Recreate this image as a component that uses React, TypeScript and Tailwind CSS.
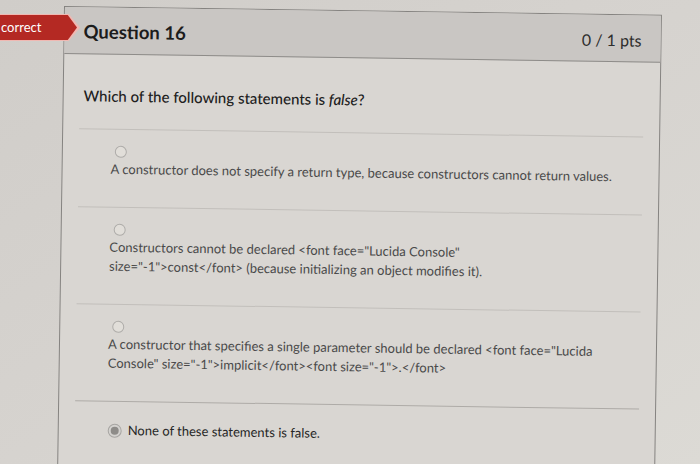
import React from "react";

function Radio({ selected = false }: { selected?: boolean }) {
  if (selected) {
    return (
      <div className="w-[14px] h-[14px] rounded-full bg-[#d4d2cf] border border-[#a7a5a2] flex items-center justify-center shrink-0">
        <div className="w-[8px] h-[8px] rounded-full bg-[#8e8c89]" />
      </div>
    );
  }
  return <div className="w-[12px] h-[12px] rounded-full border border-[#aeaca9] bg-[#e1ded9]" />;
}

function Answer({ lines }: { lines: string[] }) {
  return (
    <div className="border-t border-[#c2bfbb] pt-[16px] pb-[28px]">
      <div className="pl-[36px]">
        <Radio />
      </div>
      <div className="pl-[32px] mt-[2px] text-[13px] leading-[19px] text-[#4a4a4a]">
        {lines.map((l, i) => (
          <div key={i}>{l}</div>
        ))}
      </div>
    </div>
  );
}

export default function App() {
  return (
    <div className="relative w-[700px] h-[464px] overflow-hidden bg-linear-to-br from-[#d0cdc9] via-[#d6d3cf] to-[#dcdad5] [font-family:Lato,sans-serif]">
      <div className="pl-[64px] pt-[6px]">
        <div className="w-[598px] h-[520px] origin-top-left rotate-[0.85deg] border border-[#858380] bg-[#d9d6d2]">
          <div className="h-[47px] pt-[3px] flex items-center justify-between px-[19px] bg-[#c9c6c3] border-b border-[#8e8c89]">
            <div className="text-[18.5px] font-bold text-[#1c1c1c]">Question 16</div>
            <div className="text-[16px] text-[#2e2e2e]">0 / 1 pts</div>
          </div>
          <div className="px-[16px]">
            <div className="pt-[31px] pb-[23px] pl-[4px] text-[15px] leading-[20px] text-[#202020] font-medium">
              Which of the following statements is <i>false</i>?
            </div>
            <Answer lines={["A constructor does not specify a return type, because constructors cannot return values."]} />
            <Answer
              lines={[
                'Constructors cannot be declared <font face="Lucida Console"',
                'size="-1">const</font> (because initializing an object modifies it).',
              ]}
            />
            <Answer
              lines={[
                'A constructor that specifies a single parameter should be declared <font face="Lucida',
                'Console" size="-1">implicit</font><font size="-1">.</font>',
              ]}
            />
            <div className="border-t border-[#aeaba7] pt-[19px] flex items-center gap-[6px] pl-[33px]">
              <Radio selected />
              <span className="text-[13px] leading-[19px] text-[#262626]">None of these statements is false.</span>
            </div>
          </div>
        </div>
      </div>
      <div className="absolute left-0 top-[14px] w-[80px] h-[27px] bg-[#f0b8b2] [clip-path:polygon(0_0,86%_0,100%_50%,86%_100%,0_100%)]">
        <div className="absolute left-0 top-[1px] w-[77px] h-[25px] bg-[#b42923] [clip-path:polygon(0_0,88%_0,100%_50%,88%_100%,0_100%)] flex items-center pl-[1px] text-white text-[13px]">
          correct
        </div>
      </div>
    </div>
  );
}
